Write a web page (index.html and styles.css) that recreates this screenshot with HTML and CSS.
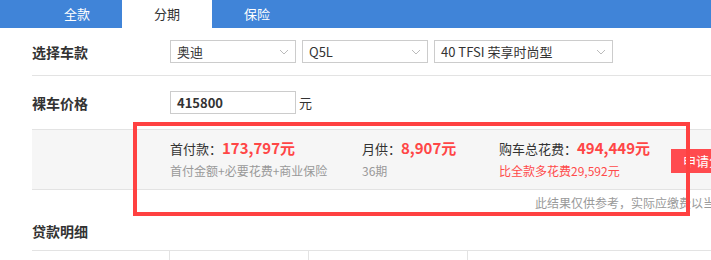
FILE: index.html
```html
<!DOCTYPE html>
<html>
<head>
    <title>分期购车计算</title>
    <link rel="stylesheet" href="styles.css">
</head>
<body>
    <div class="tabs">
        <div class="tab">全款</div>
        <div class="tab active">分期</div>
        <div class="tab">保险</div>
    </div>

    <div class="main">
        <div class="row row-model">
            <div class="label">选择车款</div>
            <div class="select sel-brand">奥迪<svg class="arrow" width="10" height="6" viewBox="0 0 10 6"><path d="M1 1l4 4 4-4" fill="none" stroke="#bbb" stroke-width="1"/></svg></div>
            <div class="select sel-series">Q5L<svg class="arrow" width="10" height="6" viewBox="0 0 10 6"><path d="M1 1l4 4 4-4" fill="none" stroke="#bbb" stroke-width="1"/></svg></div>
            <div class="select sel-spec">40 TFSI 荣享时尚型<svg class="arrow" width="10" height="6" viewBox="0 0 10 6"><path d="M1 1l4 4 4-4" fill="none" stroke="#bbb" stroke-width="1"/></svg></div>
        </div>

        <div class="row row-price">
            <div class="label">裸车价格</div>
            <div class="price-input">415800</div>
            <span class="unit">元</span>
        </div>

        <div class="result">
            <div class="result-item item-first">
                <div class="result-title">首付款：<span class="money">173,797元</span></div>
                <div class="result-sub">首付金额+必要花费+商业保险</div>
            </div>
            <div class="result-item item-month">
                <div class="result-title">月供：<span class="money">8,907元</span></div>
                <div class="result-sub">36期</div>
            </div>
            <div class="result-item item-total">
                <div class="result-title">购车总花费：<span class="money">494,449元</span></div>
                <div class="result-sub red">比全款多花费29,592元</div>
            </div>
            <div class="apply-btn">申请分期</div>
        </div>

        <div class="note">此结果仅供参考，实际应缴费以当地为准</div>

        <h3 class="section-title">贷款明细</h3>
        <div class="loan-table">
            <div class="cell c1"></div>
            <div class="cell c2"></div>
            <div class="cell c3"></div>
            <div class="cell c4"></div>
        </div>
    </div>

    <div class="mark"></div>
</body>
</html>
```

FILE: styles.css
```css
body {
    font-family: "Noto Sans CJK SC", "Noto Sans", sans-serif;
    color: #333;
    margin: 0;
    padding: 0;
    overflow: hidden;
    background: #ffffff;
}
.tabs {
    display: flex;
    height: 28px;
    background: #4084d8;
    padding-left: 32px;
}
.tab {
    width: 90px;
    line-height: 28px;
    text-align: center;
    font-size: 13px;
    color: #ffffff;
}
.tab.active {
    background: #ffffff;
    color: #333;
}
.main {
    margin-left: 32px;
    width: 740px;
}
.row {
    display: flex;
    align-items: center;
    border-bottom: 1px solid #e3e3e3;
}
.row-model {
    height: 47px;
}
.row-price {
    height: 53px;
}
.label {
    width: 138px;
    font-size: 14px;
    font-weight: bold;
    color: #333;
}
.select {
    display: flex;
    align-items: center;
    justify-content: space-between;
    box-sizing: border-box;
    height: 23px;
    border: 1px solid #cccccc;
    padding: 0 6px 0 6px;
    font-size: 13px;
    color: #333;
    margin-right: 6px;
}
.sel-brand, .sel-series {
    width: 126px;
}
.sel-spec {
    width: 179px;
}
.arrow {
    margin-top: 1px;
}
.price-input {
    box-sizing: border-box;
    width: 126px;
    height: 23px;
    line-height: 21px;
    border: 1px solid #cccccc;
    padding-left: 6px;
    font-size: 13px;
    font-weight: bold;
}
.unit {
    font-size: 13px;
    margin-left: 3px;
}
.result {
    display: flex;
    align-items: center;
    height: 59px;
    background: #f6f6f6;
    border-bottom: 1px solid #e3e3e3;
    padding-left: 138px;
}
.result-title {
    font-size: 13px;
    line-height: 22px;
    color: #333;
}
.money {
    font-size: 15px;
    font-weight: bold;
    color: #ff4646;
}
.result-sub {
    font-size: 12px;
    line-height: 22px;
    color: #999;
}
.result-sub.red {
    color: #ff4a4a;
}
.item-first {
    width: 192px;
}
.item-month {
    width: 137px;
}
.item-total {
    width: 172px;
}
.apply-btn {
    height: 24px;
    line-height: 24px;
    padding: 0 12px;
    background: #ff4b4f;
    color: #ffffff;
    font-size: 13px;
    margin-top: 2px;
    white-space: nowrap;
}
.note {
    text-align: right;
    font-size: 12px;
    color: #999;
    line-height: 26px;
    padding-right: 21px;
    white-space: nowrap;
}
.section-title {
    margin: 0;
    font-size: 14px;
    font-weight: bold;
    line-height: 20px;
    padding-top: 5px;
    height: 29px;
}
.loan-table {
    display: flex;
    border-top: 1px solid #e3e3e3;
    height: 20px;
}
.cell {
    border-right: 1px solid #e3e3e3;
}
.c1 {
    width: 137px;
}
.c2 {
    width: 138px;
}
.c3 {
    width: 158px;
}
.c4 {
    flex: 1;
    border-right: none;
}
.mark {
    position: absolute;
    left: 133px;
    top: 122px;
    width: 549px;
    height: 86px;
    border: 4px solid #ff4141;
}
```
